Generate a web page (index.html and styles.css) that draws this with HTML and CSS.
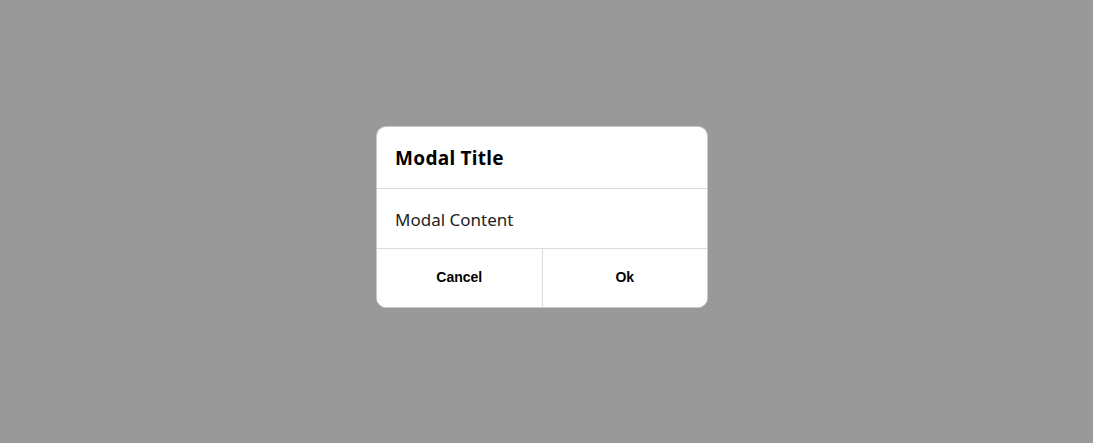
FILE: index.html
```html
<!DOCTYPE html>
<html>
<head>
<meta charset="utf-8">
<link rel="stylesheet" href="styles.css">
</head>
<body>
<div class="overlay">
  <div class="modal">
    <div class="modal-header">Modal Title</div>
    <div class="modal-body">Modal Content</div>
    <div class="modal-footer">
      <button class="btn btn-cancel">Cancel</button>
      <button class="btn">Ok</button>
    </div>
  </div>
</div>
</body>
</html>
```
FILE: styles.css
```css
html, body {
  margin: 0;
  height: 100%;
}
body {
  background: #999999;
  font-family: "Noto Sans", "Open Sans", sans-serif;
}
.overlay {
  height: 100%;
  display: flex;
  justify-content: center;
  align-items: center;
  padding: 0 9px 10px 0;
  box-sizing: border-box;
}
.modal {
  width: 332px;
  box-sizing: border-box;
  background: #fff;
  border: 1px solid #c8c8c8;
  border-radius: 10px;
  overflow: hidden;
}
.modal-header {
  height: 62px;
  box-sizing: border-box;
  padding: 1px 18px 0;
  display: flex;
  align-items: center;
  font-size: 19px;
  font-weight: 700;
  letter-spacing: 0.3px;
  color: #000;
  border-bottom: 1px solid #dcdcdc;
}
.modal-body {
  height: 60px;
  box-sizing: border-box;
  padding: 2px 18px 0;
  display: flex;
  align-items: center;
  font-size: 17px;
  color: #222;
  border-bottom: 1px solid #dcdcdc;
}
.modal-footer {
  display: flex;
  height: 58px;
}
.btn {
  flex: 1;
  border: 0;
  background: #fff;
  font-family: "Liberation Sans", Arial, sans-serif;
  font-weight: 700;
  font-size: 14px;
  color: #000;
  padding: 0 0 2px;
}
.btn-cancel {
  border-right: 1px solid #dcdcdc;
}
```
